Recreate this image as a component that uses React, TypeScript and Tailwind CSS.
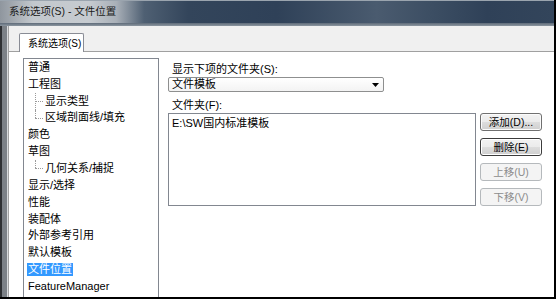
const FONT = "font-['Liberation_Sans','Noto_Sans_CJK_SC',sans-serif]";

type Item = { label: string; child?: boolean; last?: boolean; selected?: boolean };

const items: Item[] = [
  { label: "普通" },
  { label: "工程图" },
  { label: "显示类型", child: true },
  { label: "区域剖面线/填充", child: true, last: true },
  { label: "颜色" },
  { label: "草图" },
  { label: "几何关系/捕捉", child: true, last: true },
  { label: "显示/选择" },
  { label: "性能" },
  { label: "装配体" },
  { label: "外部参考引用" },
  { label: "默认模板" },
  { label: "文件位置", selected: true },
  { label: "FeatureManager" },
];

const TreeRow = ({ item }: { item: Item }) => {
  if (item.child) {
    return (
      <div className="flex h-[16.85px] items-center pl-[11px]">
        {/* tree connector */}
        <div className="relative h-full w-[9px] shrink-0">
          <div
            className={`absolute left-0 top-0 border-l border-dotted border-[#9a9a9a] ${
              item.last ? "h-1/2" : "h-full"
            }`}
          />
          <div className="absolute left-0 top-1/2 w-[8px] border-t border-dotted border-[#9a9a9a]" />
        </div>
        <span className="ml-[1px] whitespace-nowrap leading-[13px]">{item.label}</span>
      </div>
    );
  }
  return (
    <div className="flex h-[16.85px] items-center pl-[3px]">
      <span
        className={`whitespace-nowrap px-[1px] leading-[13px] ${
          item.selected ? "bg-[#3399ff] text-white" : ""
        }`}
      >
        {item.label}
      </span>
    </div>
  );
};

const Btn = ({ label, disabled, focused }: { label: string; disabled?: boolean; focused?: boolean }) => (
  <button
    className={`flex h-[18px] w-[62px] items-center justify-center rounded-[3px] border text-[10.5px] leading-none ${
      disabled
        ? "border-[#b5b9bc] bg-[#f4f4f4] text-[#8c8c8c]"
        : focused
          ? "border-[#3c3c3c] bg-[linear-gradient(180deg,#f2f2f2_0%,#ebebeb_50%,#dddddd_51%,#cfcfcf_100%)] text-black shadow-[inset_0_0_0_1px_#ffffff]"
          : "border-[#707070] bg-[linear-gradient(180deg,#f2f2f2_0%,#ebebeb_50%,#dddddd_51%,#cfcfcf_100%)] text-black shadow-[inset_0_0_0_1px_#fbfbfb]"
    }`}
  >
    {label}
  </button>
);

export default function App() {
  return (
    <div className={`flex h-[299px] w-[556px] flex-col overflow-hidden bg-black text-[11px] text-black ${FONT}`}>
      <div className="flex min-h-0 flex-1">
        <div className="flex min-w-0 flex-1 flex-col">
          {/* title bar */}
          <div className="flex h-[23px] shrink-0 items-center border-t border-[#9aa4ae] bg-[linear-gradient(90deg,#8f969e_0%,#c3c8cd_6%,#c6cbd0_16%,#a9b0b8_21%,#4f6073_26%,#33455b_34%,#2f4158_50%,#4a5b6f_68%,#3c4e63_78%,#2f4158_88%,#33455b_100%)] pl-[9px] text-[10.5px] text-[#1a1a1a]">
            系统选项(S) - 文件位置
          </div>
          <div className="h-[3px] shrink-0 bg-[linear-gradient(180deg,#5e6b79,#8c96a0)]" />

          <div className="flex min-h-0 flex-1">
            {/* left window frame */}
            <div className="flex w-[8px] shrink-0">
              <div className="w-[2px] bg-[#2e3033]" />
              <div className="w-[5px] bg-[#7c8187]" />
              <div className="w-[1px] bg-[#d9dbde]" />
            </div>

            <div className="flex min-w-0 flex-1 flex-col border-l border-[#a3a3a3]">
              {/* tab strip */}
              <div className="flex h-[25px] shrink-0 items-end bg-[#f0f0f0] pl-[10px]">
                <div className="relative z-10 -mb-px flex h-[19px] w-[65px] items-center rounded-t-[2px] border border-b-0 border-[#898c95] bg-white pl-[8px] text-[10px]">
                  系统选项(S)
                </div>
              </div>

              {/* tab page */}
              <div className="flex min-h-0 flex-1 overflow-hidden border-t border-[#a0a0a0] bg-white pl-[14px] pt-[6px]">
                <div className="h-[260px] w-[136px] shrink-0 overflow-hidden border border-[#828790] pt-0">
                  {items.map((it) => (
                    <TreeRow key={it.label} item={it} />
                  ))}
                </div>

                <div className="ml-[9px] flex flex-col pt-[4px]">
                  <div className="h-[14px] pl-[4px] leading-[14px]">显示下项的文件夹(S):</div>
                  <div className="mt-[1px] flex h-[15px] w-[216px] items-center justify-between rounded-[2px] border border-[#8e8f8f] bg-[linear-gradient(180deg,#ffffff,#f3f3f3)] pl-[3px] pr-[3px]">
                    <span className="leading-[13px]">文件模板</span>
                    <svg width="7" height="4" viewBox="0 0 7 4" className="mr-[1px]">
                      <path d="M0 0h7L3.5 4z" fill="#000" />
                    </svg>
                  </div>
                  <div className="mt-[6px] h-[14px] pl-[4px] leading-[14px]">文件夹(F):</div>
                  <div className="mt-[1px] flex">
                    <div className="h-[93px] w-[308px] border border-[#828790] pl-[3px] pt-[2px] leading-[14px]">
                      E:\SW国内标准模板
                    </div>
                    <div className="ml-[4px] flex flex-col gap-[7px]">
                      <Btn label="添加(D)..." />
                      <Btn label="删除(E)" focused />
                      <Btn label="上移(U)" disabled />
                      <Btn label="下移(V)" disabled />
                    </div>
                  </div>
                </div>
              </div>
            </div>
          </div>
        </div>
        <div className="w-[2px] shrink-0 bg-black" />
      </div>
      <div className="h-[2px] shrink-0 bg-black" />
    </div>
  );
}
